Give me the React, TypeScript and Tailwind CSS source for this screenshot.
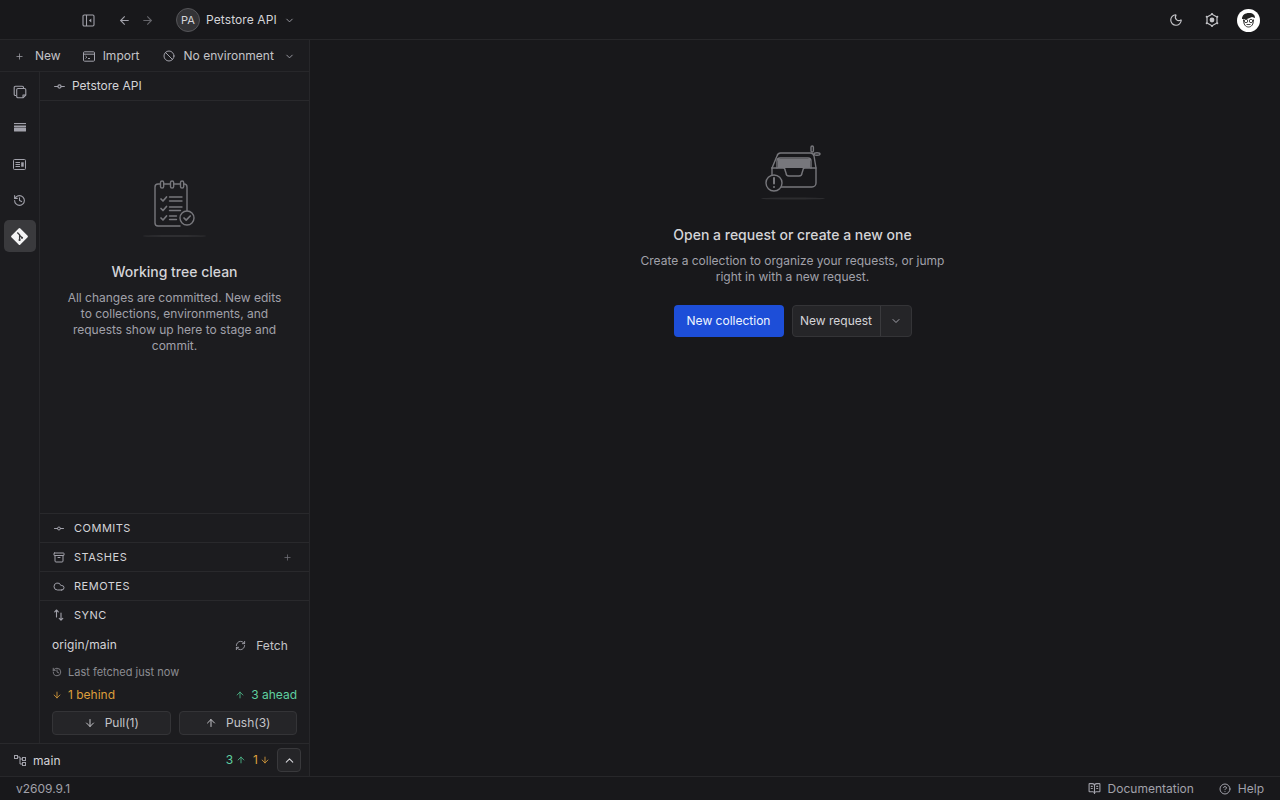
import React from "react";
import {
  ArrowLeft, ArrowRight, ChevronDown, ChevronUp, Plus, Ban, GitCommitHorizontal,
  Archive, Cloud, RefreshCw, History, ArrowDown, ArrowUp, Moon, BookOpenText, CircleHelp,
} from "lucide-react";

const Section = ({ icon, label, right }: { icon: React.ReactNode; label: string; right?: React.ReactNode }) => (
  <div className="h-[29px] flex items-center pl-[13px] pr-[17px] border-t border-[#29292c] shrink-0">
    <span className="w-[12px] flex justify-center text-[#a1a1aa]">{icon}</span>
    <span className="ml-[9px] text-[11px] tracking-[0.5px] text-[#d4d4d8] font-normal">{label}</span>
    <span className="ml-auto">{right}</span>
  </div>
);

const Rail = ({ children, active }: { children: React.ReactNode; active?: boolean }) => (
  <div className={`w-[32px] h-[32px] rounded-[5px] flex items-center justify-center ${active ? "bg-[#3a3a3d] text-white" : "text-[#a1a1aa]"}`}>{children}</div>
);

const ChecklistArt = () => (
  <svg width="70" height="58" viewBox="0 0 70 58" fill="none" stroke="#77777c" strokeWidth="1.4" strokeLinecap="round" strokeLinejoin="round">
    <path d="M47 38V8a3 3 0 0 0-3-3H18a3 3 0 0 0-3 3v36a3 3 0 0 0 3 3h22" />
    <rect x="20.500" y="2" width="3.200" height="7" rx="1.600" fill="#1c1c1f" />
    <rect x="30.500" y="2" width="3.200" height="7" rx="1.600" fill="#1c1c1f" />
    <rect x="40.500" y="2" width="3.200" height="7" rx="1.600" fill="#1c1c1f" />
    <path d="M21 20l2 2 3.500-4M21 29.500l2 2 3.500-4M21 39l2 2 3.500-4" strokeWidth="1.700" />
    <path d="M29.500 18h12.500M29.500 22h12.500M29.500 28h12.500M29.500 31.500h11M29.500 37h7M29.500 40.500h7" />
    <circle cx="47" cy="39" r="7" fill="#1c1c1f" />
    <path d="M44 39l2.200 2.200 4-4.200" strokeWidth="1.700" />
    <ellipse cx="34.500" cy="57" rx="32" ry="1" fill="#2e2e31" stroke="none" />
  </svg>
);

const InboxArt = () => (
  <svg width="70" height="62" viewBox="0 0 70 62" fill="none" stroke="#77777c" strokeWidth="1.400" strokeLinecap="round" strokeLinejoin="round">
    <path d="M14 24l5-12a4 4 0 0 1 3.500-3h30a4 4 0 0 1 3.500 3l2 12v15a4 4 0 0 1-4 4H22" />
    <path d="M14 24v10" />
    <path d="M19 24v-7a3 3 0 0 1 3-3h28a3 3 0 0 1 3 3v7" />
    <rect x="20" y="15" width="32" height="9" fill="#77777c" stroke="none" />
    <path d="M14 24h11a2 2 0 0 1 2 2l1 3a3 3 0 0 0 3 3h10a3 3 0 0 0 3-3l1-3a2 2 0 0 1 2-2h11" />
    <circle cx="16" cy="39" r="8" fill="#18181b" />
    <path d="M16 34v5.500" strokeWidth="2" />
    <circle cx="16" cy="43" r="1" fill="#77777c" stroke="none" />
    <rect x="53" y="2" width="2.400" height="6" rx="1.200" />
    <ellipse cx="59" cy="10" rx="3" ry="1.200" />
    <ellipse cx="35" cy="54.500" rx="32" ry="1" fill="#2c2c2f" stroke="none" />
  </svg>
);

const GitDiamond = () => (
  <svg width="17" height="17" viewBox="0 0 17 17">
    <path d="M7.600.600a1.200 1.200 0 0 1 1.800 0l7 7a1.200 1.200 0 0 1 0 1.800l-7 7a1.200 1.200 0 0 1-1.800 0l-7-7a1.200 1.200 0 0 1 0-1.800z" fill="#f4f4f5" />
    <path d="M6.300 4.500 8.600 6.800v5M8.600 7.200l2.400 2.400" stroke="#3a3a3d" strokeWidth="1.300" fill="none" />
    <circle cx="8.600" cy="12" r="1.100" fill="#3a3a3d" />
    <circle cx="11" cy="9.800" r="1.100" fill="#3a3a3d" />
  </svg>
);

const Avatar = () => (
  <svg width="23" height="23" viewBox="0 0 23 23">
    <circle cx="11.500" cy="11.500" r="11.500" fill="#fff" />
    <path d="M5 10c0-4 3-6 7-6s6 2 6 5l-3-1-5 2z" fill="#222" />
    <path d="M6.500 10.500c0 5 2 7.500 5 7.500s5-2.500 5-7.500" fill="none" stroke="#333" strokeWidth="1" />
    <circle cx="9" cy="12" r="1.700" fill="none" stroke="#333" strokeWidth=".9" />
    <circle cx="14" cy="12" r="1.700" fill="none" stroke="#333" strokeWidth=".9" />
    <path d="M9.500 15.500h4" stroke="#333" strokeWidth=".9" />
  </svg>
);

const SidebarToggle = () => (
  <svg width="13" height="13" viewBox="0 0 13 13" fill="none" stroke="#a1a1aa" strokeWidth="1.100" className="ml-[82px]">
    <rect x="1" y="1" width="11" height="11" rx="1.200" />
    <path d="M4.500 1v11" />
    <path d="M9.300 4.500v4l-2.400-2z" fill="#a1a1aa" stroke="none" />
  </svg>
);

const Gear = () => (
  <svg width="16" height="16" viewBox="0 0 16 16" fill="none" stroke="#c4c4c8" strokeWidth="1.200" strokeLinejoin="round" className="ml-[21px]">
    <path d="M8 2.200 13 5v6l-5 2.800L3 11V5z" />
    <circle cx="8" cy="1.900" r="1" fill="#c4c4c8" stroke="none" />
    <circle cx="13.300" cy="4.800" r="1" fill="#c4c4c8" stroke="none" />
    <circle cx="13.300" cy="11.200" r="1" fill="#c4c4c8" stroke="none" />
    <circle cx="8" cy="14.100" r="1" fill="#c4c4c8" stroke="none" />
    <circle cx="2.700" cy="11.200" r="1" fill="#c4c4c8" stroke="none" />
    <circle cx="2.700" cy="4.800" r="1" fill="#c4c4c8" stroke="none" />
    <circle cx="8" cy="8" r="2.400" fill="#c4c4c8" stroke="none" />
  </svg>
);

const ImportIcon = () => (
  <svg width="12" height="11" viewBox="0 0 12 11" fill="none" stroke="#a1a1aa" strokeWidth="1" className="ml-[22px]">
    <rect x=".5" y=".8" width="11" height="9.400" rx="1" />
    <path d="M.5 3.200h11" />
    <path d="M2.500 5l1.300 1.200-1.300 1.200M5 7.500h2" />
  </svg>
);

const CollectionsIcon = () => (
  <svg width="14" height="14" viewBox="0 0 14 14" fill="none" stroke="#a1a1aa" strokeWidth="1.100" strokeLinejoin="round">
    <path d="M3 10.500H2.500a1.300 1.300 0 0 1-1.300-1.300V2.500a1.300 1.300 0 0 1 1.300-1.300h6.700A1.300 1.300 0 0 1 10.500 2.500V3" />
    <path d="M5 3.500h6.500A1.300 1.300 0 0 1 12.800 4.800v5.200L10 12.800H5A1.300 1.300 0 0 1 3.700 11.500V4.800A1.300 1.300 0 0 1 5 3.500z" />
    <path d="M12.800 10H10v2.800" />
  </svg>
);

const LayersIcon = () => (
  <svg width="12" height="10" viewBox="0 0 12 10" fill="#a1a1aa"><rect y="0" width="12" height="1.100" /><rect y="2.500" width="12" height="1.600" /><rect y="4.600" width="12" height="4" rx=".5" /></svg>
);

const EnvIcon = () => (
  <svg width="13" height="11" viewBox="0 0 13 11" fill="none" stroke="#a1a1aa" strokeWidth="1">
    <rect x=".5" y=".5" width="12" height="10" rx="1" />
    <path d="M2.500 3.500h4.500M2.500 5.500h4.500M2.500 7.500h4.500" />
    <rect x="8.200" y="3.300" width="2.500" height="4.400" fill="#a1a1aa" stroke="none" />
  </svg>
);

const BranchIcon = () => (
  <svg width="12" height="11" viewBox="0 0 12 11" fill="none" stroke="#a1a1aa" strokeWidth="1">
    <rect x=".5" y=".5" width="3" height="3" />
    <rect x="8.500" y="2.500" width="3" height="3" />
    <rect x="8.500" y="7.500" width="3" height="3" />
    <path d="M3.500 2H6v7h2.500M6 4h2.500" />
  </svg>
);

const SyncIcon = () => (
  <svg width="12" height="12" viewBox="0 0 12 12" fill="none" stroke="currentColor" strokeWidth="1.100" strokeLinecap="round" strokeLinejoin="round">
    <path d="M3.500 8V1M1.700 2.800 3.500 1l1.800 1.800M8 4v7.200M6.200 9.400 8 11.200l1.800-1.800" />
  </svg>
);

export default function App() {
  return (
    <div className="w-[1280px] h-[800px] overflow-hidden flex flex-col bg-[#18181b] text-[#d4d4d8] text-[13px] font-['Inter',sans-serif]">
      <header className="h-[40px] shrink-0 flex items-center border-b border-[#27272a] pr-[20px] pt-[1px]">
        <SidebarToggle />
        <ArrowLeft size={13} className="ml-[23px] text-[#a1a1aa]" />
        <ArrowRight size={13} className="ml-[10px] text-[#65656b]" />
        <div className="ml-[22px] w-[24px] h-[24px] rounded-full bg-[#333336] border border-[#555559] flex items-center justify-center text-[11px] text-[#d4d4d8]">PA</div>
        <span className="ml-[6px] text-[#d4d4d8] text-[12px] tracking-[0.1px]">Petstore API</span>
        <ChevronDown size={11} className="ml-[7px] text-[#a1a1aa]" />
        <Moon size={14} className="ml-auto text-[#c4c4c8]" />
        <Gear />
        <span className="ml-[17px] flex"><Avatar /></span>
      </header>

      <div className="flex-1 min-h-0 flex">
        <aside className="w-[310px] shrink-0 flex flex-col bg-[#1c1c1f] border-r border-[#27272a]">
          <div className="h-[32px] shrink-0 flex items-center border-b border-[#27272a] text-[12px] text-[#c4c4c8] pt-[1px]">
            <Plus size={9} className="ml-[15px] text-[#a1a1aa]" />
            <span className="ml-[11px]">New</span>
            <ImportIcon />
            <span className="ml-[8px]">Import</span>
            <Ban size={12} className="ml-[23px] text-[#a1a1aa]" />
            <span className="ml-[9px]">No environment</span>
            <ChevronDown size={11} className="ml-[10px] text-[#a1a1aa]" />
          </div>

          <div className="flex-1 min-h-0 flex">
            <nav className="w-[40px] shrink-0 border-r border-[#27272a] flex flex-col items-center gap-[4px] pt-[4px]">
              <Rail><CollectionsIcon /></Rail>
              <Rail><LayersIcon /></Rail>
              <Rail><EnvIcon /></Rail>
              <Rail><History size={13} /></Rail>
              <Rail active><GitDiamond /></Rail>
            </nav>

            <div className="flex-1 min-w-0 flex flex-col">
              <div className="h-[29px] shrink-0 flex items-center pl-[13px] border-b border-[#29292c] text-[12px] text-[#d4d4d8]">
                <GitCommitHorizontal size={13} className="text-[#a1a1aa]" />
                <span className="ml-[6px]">Petstore API</span>
              </div>

              <div className="flex-1 min-h-0 flex flex-col items-center pt-[78px] px-[24px] text-center">
                <ChecklistArt />
                <h2 className="mt-[25px] text-[14px] font-medium leading-[20px] text-[#d4d4d8]">Working tree clean</h2>
                <p className="mt-[8px] text-[12px] leading-[16px] text-[#a1a1aa]">All changes are committed. New edits to collections, environments, and requests show up here to stage and commit.</p>
              </div>

              <Section icon={<GitCommitHorizontal size={13} />} label="COMMITS" />
              <Section icon={<Archive size={13} />} label="STASHES" right={<Plus size={9} className="text-[#71717a]" />} />
              <Section icon={<Cloud size={13} />} label="REMOTES" />
              <Section icon={<SyncIcon />} label="SYNC" />

              <div className="shrink-0 px-[12px] pb-[8px]">
                <div className="h-[30px] mt-[1px] flex items-center">
                  <span className="text-[12px] tracking-[0.1px] text-[#d4d4d8]">origin/main</span>
                  <RefreshCw size={11} className="ml-auto text-[#a1a1aa] mt-[1px]" />
                  <span className="ml-[10px] mr-[9px] mt-[1px] text-[12px] tracking-[0.1px] text-[#c4c4c8]">Fetch</span>
                </div>
                <div className="h-[20px] mt-[2px] flex items-center text-[11px] text-[#8c8c92]">
                  <History size={10} />
                  <span className="ml-[6px]">Last fetched just now</span>
                </div>
                <div className="h-[20px] mt-[3px] flex items-center text-[12px]">
                  <ArrowDown size={10} className="text-[#dc9f3c]" />
                  <span className="ml-[6px] text-[#dc9f3c]">1 behind</span>
                  <ArrowUp size={10} className="ml-auto text-[#4ebc8c]" />
                  <span className="ml-[6px] text-[#5fd0a0]">3 ahead</span>
                </div>
                <div className="mt-[6px] flex gap-[8px]">
                  <button className="flex-1 h-[24px] rounded-[4px] bg-[#252528] border border-[#343437] flex items-center justify-center gap-[9px] text-[12px] text-[#c4c4c8]">
                    <ArrowDown size={12} />Pull(1)
                  </button>
                  <button className="flex-1 h-[24px] rounded-[4px] bg-[#252528] border border-[#343437] flex items-center justify-center gap-[9px] text-[12px] text-[#c4c4c8]">
                    <ArrowUp size={12} />Push(3)
                  </button>
                </div>
              </div>
            </div>
          </div>

          <div className="h-[33px] shrink-0 flex items-center border-t border-[#29292c] pl-[14px] pr-[8px]">
            <BranchIcon />
            <span className="ml-[7px] mt-[1px] text-[12px] tracking-[0.1px] text-[#d4d4d8]">main</span>
            <span className="ml-auto text-[12px] text-[#5fd0a0]">3</span>
            <ArrowUp size={10} className="ml-[3px] text-[#4ebc8c]" />
            <span className="ml-[7px] text-[12px] text-[#dc9f3c]">1</span>
            <ArrowDown size={10} className="ml-[2px] text-[#dc9f3c]" />
            <div className="ml-[7px] w-[24px] h-[24px] rounded-[4px] border border-[#39393c] bg-[#252528] flex items-center justify-center">
              <ChevronUp size={13} className="text-[#d4d4d8]" />
            </div>
          </div>
        </aside>

        <main className="flex-1 min-w-0 flex flex-col items-center pt-[104px] pr-[5px]">
          <InboxArt />
          <h1 className="mt-[19px] text-[14px] leading-[20px] font-medium text-[#d4d4d8]">Open a request or create a new one</h1>
          <p className="mt-[8px] w-[330px] text-center text-[12px] leading-[16px] text-[#a1a1aa]">Create a collection to organize your requests, or jump right in with a new request.</p>
          <div className="mt-[20px] flex gap-[8px]">
            <button className="h-[32px] w-[110px] rounded-[4px] bg-[#1d4ed8] text-[12px] text-[#eff6ff]">New collection</button>
            <div className="h-[32px] flex rounded-[4px] border border-[#343437] bg-[#252528] text-[12px] text-[#d4d4d8]">
              <span className="w-[88px] flex items-center justify-center border-r border-[#3a3a3d]">New request</span>
              <span className="w-[30px] flex items-center justify-center"><ChevronDown size={12} className="text-[#a1a1aa]" /></span>
            </div>
          </div>
        </main>
      </div>

      <footer className="h-[24px] shrink-0 border-t border-[#27272a] flex items-center pl-[16px] pr-[16px] text-[12px] text-[#a1a1aa]">
        <span>v2609.9.1</span>
        <BookOpenText size={13} className="ml-auto" />
        <span className="ml-[7px]">Documentation</span>
        <CircleHelp size={12} className="ml-[25px]" />
        <span className="ml-[7px]">Help</span>
      </footer>
    </div>
  );
}
